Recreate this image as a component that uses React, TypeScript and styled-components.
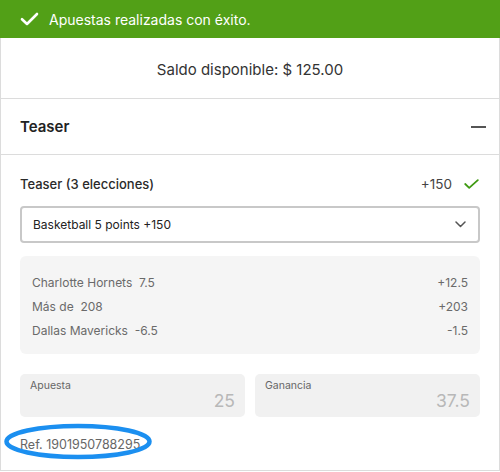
import React from "react";
import styled, { createGlobalStyle } from "styled-components";

const Global = createGlobalStyle`
  html, body { margin: 0; padding: 0; background: #fff; }
  body { font-family: Inter, "Open Sans", sans-serif; color: #333; }
  * { box-sizing: border-box; }
`;

const Page = styled.div`
  width: 500px;
  height: 472px;
  display: flex;
  flex-direction: column;
`;

const Banner = styled.div`
  height: 38px;
  background: #52a017;
  color: #fff;
  display: flex;
  align-items: center;
  gap: 10px;
  padding-left: 20px;
  font-size: 14px;
`;

const Card = styled.div`
  height: 433px;
  border: 1px solid #dcdcdc;
  border-top: none;
  display: flex;
  flex-direction: column;
`;

const Balance = styled.div`
  height: 61px;
  border-bottom: 1px solid #dcdcdc;
  display: flex;
  align-items: center;
  justify-content: center;
  font-size: 15px;
  color: #333;
  padding-top: 2px;
`;

const Header = styled.div`
  height: 56px;
  border-bottom: 1px solid #dcdcdc;
  display: flex;
  align-items: center;
  justify-content: space-between;
  padding: 0 13px 0 19px;
  font-size: 15px;
  font-weight: 600;
  color: #222;
`;

const Minus = styled.span`
  width: 15px;
  height: 2px;
  background: #555;
  display: block;
`;

const Body = styled.div`
  padding: 20px 19px 0 19px;
  display: flex;
  flex-direction: column;
`;

const TitleRow = styled.div`
  display: flex;
  align-items: center;
  justify-content: space-between;
  height: 18px;
  font-size: 13px;
  font-weight: 500;
  color: #2a2a2a;
`;

const Odds = styled.span`
  display: flex;
  align-items: center;
  gap: 12px;
  font-weight: 400;
  font-size: 13.5px;
  color: #444;
  padding-right: 1px;
`;

const Select = styled.div`
  margin-top: 13px;
  height: 37px;
  border: 2px solid #c8c8c8;
  border-radius: 4px;
  display: flex;
  align-items: center;
  justify-content: space-between;
  padding: 0 12px 0 11px;
  font-size: 12px;
  color: #222;
`;

const Picks = styled.div`
  margin-top: 13px;
  height: 98px;
  background: #f5f5f5;
  border-radius: 6px;
  padding: 17px 12px 0 12px;
  display: flex;
  flex-direction: column;
  gap: 6px;
`;

const PickRow = styled.div`
  display: flex;
  justify-content: space-between;
  height: 18px;
  align-items: center;
  font-size: 12px;
  color: #6a6a6a;
`;

const Inputs = styled.div`
  margin-top: 20px;
  display: grid;
  grid-template-columns: 1fr 1fr;
  gap: 10px;
`;

const Field = styled.div`
  height: 43px;
  background: #f1f1f1;
  border-radius: 5px;
  padding: 5px 10px 0 10px;
  display: flex;
  flex-direction: column;
`;

const FieldLabel = styled.span`
  font-size: 10.5px;
  color: #666;
`;

const FieldValue = styled.span`
  font-size: 17.5px;
  color: #b8b8b8;
  text-align: right;
  margin-top: -2px;
`;

const RefWrap = styled.div`
  position: relative;
  margin-top: 18px;
  font-size: 12.5px;
  color: #666;
  height: 18px;
  display: flex;
  align-items: center;
`;

const Ellipse = styled.svg`
  position: absolute;
  left: -16px;
  top: -13px;
  pointer-events: none;
`;

const picks = [
  { name: "Charlotte Hornets\u00a0 7.5", v: "+12.5" },
  { name: "Más de\u00a0 208", v: "+203" },
  { name: "Dallas Mavericks\u00a0 -6.5", v: "-1.5" },
];

export default function App() {
  return (
    <Page>
      <Global />
      <Banner>
        <svg width="19" height="14" viewBox="0 0 19 14">
          <path d="M2 7.2 L7 12 L17 2" fill="none" stroke="#fff" strokeWidth="2.6" strokeLinecap="round" strokeLinejoin="round" />
        </svg>
        Apuestas realizadas con éxito.
      </Banner>
      <Card>
        <Balance>Saldo disponible: $ 125.00</Balance>
        <Header>
          Teaser
          <Minus />
        </Header>
        <Body>
          <TitleRow>
            Teaser (3 elecciones)
            <Odds>
              +150
              <svg width="15" height="10" viewBox="0 0 15 10">
                <path d="M1.2 5 L5.2 8.8 L13.8 1.2" fill="none" stroke="#3f9a12" strokeWidth="1.8" strokeLinecap="round" strokeLinejoin="round" />
              </svg>
            </Odds>
          </TitleRow>
          <Select>
            Basketball 5 points +150
            <svg width="11" height="7" viewBox="0 0 11 7">
              <path d="M1 1 L5.5 5.5 L10 1" fill="none" stroke="#555" strokeWidth="1.5" strokeLinecap="round" strokeLinejoin="round" />
            </svg>
          </Select>
          <Picks>
            {picks.map((p) => (
              <PickRow key={p.v}>
                <span>{p.name}</span>
                <span>{p.v}</span>
              </PickRow>
            ))}
          </Picks>
          <Inputs>
            <Field>
              <FieldLabel>Apuesta</FieldLabel>
              <FieldValue>25</FieldValue>
            </Field>
            <Field>
              <FieldLabel>Ganancia</FieldLabel>
              <FieldValue>37.5</FieldValue>
            </Field>
          </Inputs>
          <RefWrap>
            Ref. 1901950788295
            <Ellipse width="150" height="40" viewBox="0 0 150 40">
              <ellipse cx="74" cy="19.5" rx="71.5" ry="15.5" fill="none" stroke="#1b8ff0" strokeWidth="4.5" />
            </Ellipse>
          </RefWrap>
        </Body>
      </Card>
    </Page>
  );
}
